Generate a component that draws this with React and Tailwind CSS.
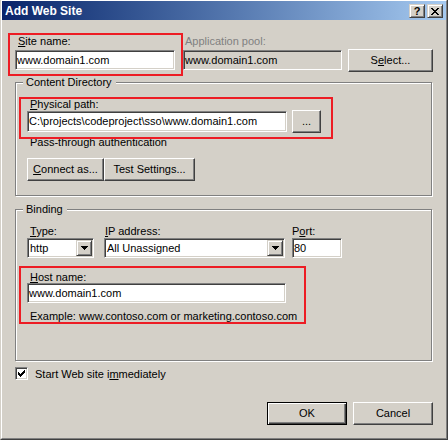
import React from 'react'

const CLOSE = ['##....##', '.##..##.', '..####..', '...##...', '..####..', '.##..##.', '##....##']
const CHECK = ['......#', '.....##', '#...###', '##.###.', '#####..', '.###...', '..#....']
const ARROW = ['#######', '.#####.', '..###..', '...#...']

const sunken =
  'border border-t-[#808080] border-l-[#808080] border-r-white border-b-white shadow-[inset_1px_1px_0_#404040,inset_-1px_-1px_0_#d4d0c8]'
const raised =
  'border border-t-white border-l-white border-r-[#404040] border-b-[#404040] shadow-[inset_-1px_-1px_0_#808080]'
const raisedSmall =
  'border border-t-[#d4d0c8] border-l-[#d4d0c8] border-r-[#404040] border-b-[#404040] shadow-[inset_1px_1px_0_#fff,inset_-1px_-1px_0_#808080]'

function Pixels({ rows }) {
  const w = rows[0].length
  const h = rows.length
  return (
    <svg width={w} height={h} viewBox={`0 0 ${w} ${h}`} shapeRendering="crispEdges" className="block">
      {rows.flatMap((r, y) =>
        [...r].map((c, x) =>
          c === '#' ? <rect key={`${x}-${y}`} x={x} y={y} width="1" height="1" fill="#000" /> : null
        )
      )}
    </svg>
  )
}

function Key({ children }) {
  return <span className="underline">{children}</span>
}

function TextBox({ value, className = '', disabled }) {
  return (
    <div
      className={`${sunken} ${disabled ? 'bg-[#d4d0c8]' : 'bg-white'} flex items-center pl-[1px] overflow-hidden whitespace-nowrap ${className}`}
    >
      {value}
    </div>
  )
}

function Combo({ value, className = '' }) {
  return (
    <div className={`${sunken} bg-white flex p-[1px] ${className}`}>
      <span className="flex-1 flex items-center pl-[1px] whitespace-nowrap overflow-hidden">{value}</span>
      <span className={`${raisedSmall} bg-[#d4d0c8] w-[16px] flex items-center justify-center`}>
        <Pixels rows={ARROW} />
      </span>
    </div>
  )
}

function Btn({ children, className = '', isDefault }) {
  const frame = isDefault
    ? 'border border-black shadow-[inset_1px_1px_0_#fff,inset_-1px_-1px_0_#404040,inset_-2px_-2px_0_#808080]'
    : raised
  return (
    <button className={`${frame} bg-[#d4d0c8] text-black flex items-center justify-center whitespace-nowrap h-[23px] ${className}`}>
      {children}
    </button>
  )
}

function Group({ title, className = '', children }) {
  return (
    <div className={`border border-[#808080] shadow-[inset_1px_1px_0_#fff,1px_1px_0_#fff] ${className}`}>
      <div className="-mt-[7px] ml-[7px] w-fit pl-[3px] pr-[4px] bg-[#d4d0c8] leading-[13px]">{title}</div>
      {children}
    </div>
  )
}

function RedMark({ className }) {
  return <div className={`absolute border-2 border-[#ed1c24] pointer-events-none ${className}`} />
}

export default function App() {
  return (
    <div className="w-[448px] h-[440px] border-l border-r border-b border-l-[#d4d0c8] border-r-[#404040] border-b-[#404040] font-['Liberation_Sans',Arial,sans-serif] text-[11px] leading-[13px] text-black">
      <div className="h-full border border-white border-r-[#808080] border-b-[#808080] bg-[#d4d0c8] flex flex-col">
        {/* title bar */}
        <div className="h-[19px] shrink-0 flex items-start justify-between bg-gradient-to-r from-[#0a246a] to-[#a6caf0] pr-[3px]">
          <div className="pl-[3px] pt-[1px] leading-[19px] text-[12px] font-bold text-white">Add Web Site</div>
          <div className="flex gap-[2px] pt-[3px]">
            <span className={`${raisedSmall} bg-[#d4d0c8] w-[16px] h-[14px] flex items-center justify-center text-[11px] font-bold leading-none`}>
              ?
            </span>
            <span className={`${raisedSmall} bg-[#d4d0c8] w-[16px] h-[14px] flex items-center justify-center`}>
              <Pixels rows={CLOSE} />
            </span>
          </div>
        </div>

        {/* body */}
        <div className="relative flex-1 pl-[13px] pr-[13px]">
          <div className="mt-[15px] flex items-start">
            <div className="w-[160px]">
              <div className="pl-[3px] h-[13px]">
                <Key>S</Key>ite name:
              </div>
              <TextBox value="www.domain1.com" className="mt-[2px] w-[160px] h-[20px]" />
            </div>
            <div className="ml-[8px] w-[159px]">
              <div className="pl-[2px] h-[13px] text-[#808080]">Application pool:</div>
              <TextBox value="www.domain1.com" disabled className="mt-[2px] w-[159px] h-[20px]" />
            </div>
            <Btn className="ml-[6px] mt-[14px] w-[85px]">
              S<Key>e</Key>lect...
            </Btn>
          </div>

          <Group title="Content Directory" className="mt-[10px] w-[417px] h-[114px]">
            <div className="mt-[9px] ml-[14px] leading-[12px] h-[12px]">
              <Key>P</Key>hysical path:
            </div>
            <div className="ml-[11px] flex items-start">
              <TextBox value="C:\projects\codeproject\sso\www.domain1.com" className="mt-[1px] w-[260px] h-[21px]" />
              <Btn className="ml-[5px] w-[29px]">...</Btn>
            </div>
            <div className="mt-[3px] ml-[14px]">Pass-through authentication</div>
            <div className="mt-[9px] ml-[11px] flex">
              <Btn className="w-[77px]">
                <Key>C</Key>onnect as...
              </Btn>
              <Btn className="w-[91px]">Test Settings...</Btn>
            </div>
          </Group>

          <Group title="Binding" className="mt-[13px] w-[417px] h-[152px]">
            <div className="mt-[9px] ml-[11px] flex items-start">
              <div className="w-[67px]">
                <div className="pl-[3px] h-[13px]">
                  <Key>T</Key>ype:
                </div>
                <Combo value="http" className="w-[67px] h-[20px]" />
              </div>
              <div className="ml-[10px] w-[181px]">
                <div className="pl-[1px] h-[13px]">
                  <Key>I</Key>P address:
                </div>
                <Combo value="All Unassigned" className="w-[181px] h-[20px]" />
              </div>
              <div className="ml-[7px] w-[50px]">
                <div className="h-[13px]">
                  P<Key>o</Key>rt:
                </div>
                <TextBox value="80" className="w-[50px] h-[20px]" />
              </div>
            </div>
            <div className="mt-[13px] ml-[14px] leading-[12px] h-[12px]">
              <Key>H</Key>ost name:
            </div>
            <TextBox value="www.domain1.com" className="ml-[11px] w-[259px] h-[20px]" />
            <div className="mt-[7px] ml-[14px]">Example: www.contoso.com or marketing.contoso.com</div>
          </Group>

          <div className="mt-[6px] flex items-start">
            <div className={`${sunken} bg-white w-[13px] h-[13px] flex items-center justify-center`}>
              <Pixels rows={CHECK} />
            </div>
            <div className="ml-[7px] mt-[1px]">
              Start Web site i<Key>m</Key>mediately
            </div>
          </div>

          <div className="mt-[21px] flex justify-end gap-[6px]">
            <Btn isDefault className="w-[80px]">OK</Btn>
            <Btn className="w-[80px]">Cancel</Btn>
          </div>

          {/* red annotation frames drawn over the dialog */}
          <RedMark className="left-[6px] top-[13px] w-[175px] h-[43px]" />
          <RedMark className="left-[17px] top-[77px] w-[314px] h-[42px]" />
          <RedMark className="left-[17px] top-[246px] w-[287px] h-[58px]" />
        </div>
      </div>
    </div>
  )
}
